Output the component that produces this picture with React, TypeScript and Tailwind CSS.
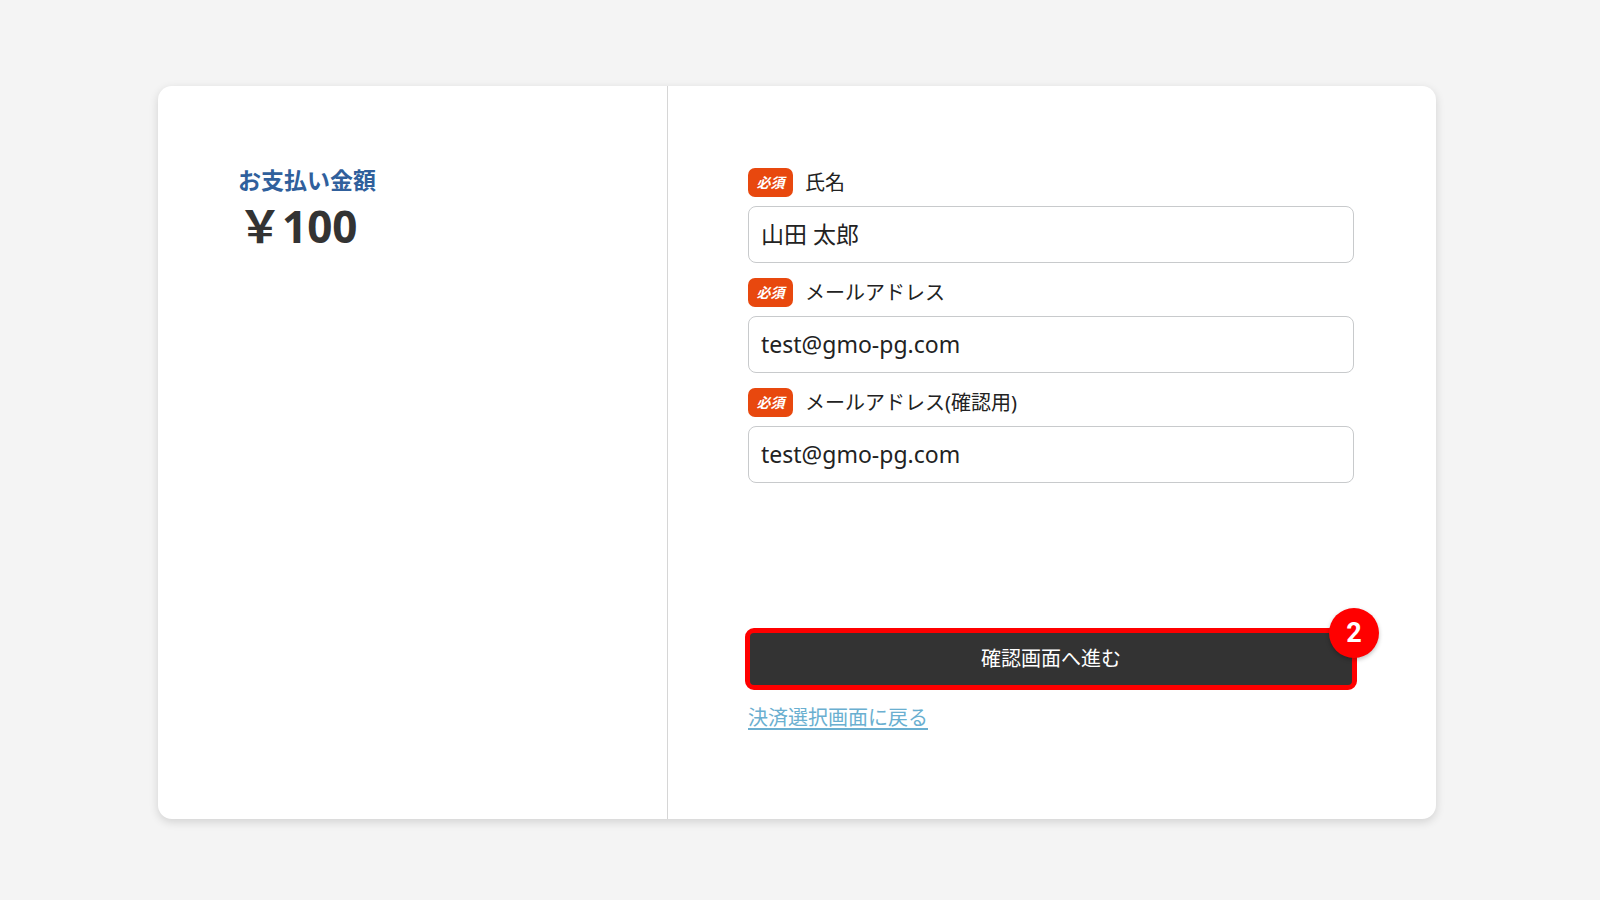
import React from "react";

const jp = { fontFamily: '"Noto Sans", "Noto Sans CJK JP", sans-serif' };

function Badge() {
  return (
    <span className="flex h-[29px] w-[45px] items-center justify-center rounded-[7px] bg-[#e8480e] text-[14px] font-bold italic text-white">
      必須
    </span>
  );
}

function Field({ label, value }: { label: string; value: string }) {
  return (
    <div className="flex flex-col">
      <div className="flex h-[29px] items-center gap-[12px]">
        <Badge />
        <span className="text-[20px] text-[#222]">{label}</span>
      </div>
      <div className="mt-[9px] flex h-[57px] w-[606px] items-center rounded-[8px] border border-[#c8cacc] bg-white px-[12px]">
        <span className="text-[23px] text-[#222]">{value}</span>
      </div>
    </div>
  );
}

export default function App() {
  return (
    <div className="h-[900px] w-[1600px] bg-[#f4f4f4] pl-[158px] pt-[86px]" style={jp}>
      <div className="flex h-[733px] w-[1278px] overflow-hidden rounded-[14px] bg-white shadow-[0_3px_10px_rgba(0,0,0,0.14)]">
        <div className="w-[510px] border-r border-[#d6d6d6] pl-[80px] pt-[80px]">
          <div className="text-[23px] font-bold leading-[28px] text-[#30609c]">お支払い金額</div>
          <div className="mt-[6px] text-[44px] font-bold leading-[52px] text-[#333]">￥100</div>
        </div>
        <div className="flex flex-1 flex-col pl-[80px] pt-[82px]">
          <div className="flex flex-col gap-[15px]">
            <Field label="氏名" value="山田 太郎" />
            <Field label="メールアドレス" value="test@gmo-pg.com" />
            <Field label="メールアドレス(確認用)" value="test@gmo-pg.com" />
          </div>
          <div className="relative mt-[145px] ml-[-3px] w-[612px]">
            <div className="flex h-[62px] items-center justify-center rounded-[9px] border-[5px] border-[#f00] bg-[#333] text-[20px] text-white">
              確認画面へ進む
            </div>
            <div
              className="absolute right-[-22px] top-[-20px] flex h-[50px] w-[50px] items-center justify-center rounded-full bg-[#f00] text-[27px] font-bold text-white shadow-[0_2px_4px_rgba(0,0,0,0.25)]"
              style={{ fontFamily: 'Roboto, "Liberation Sans", sans-serif' }}
            >
              2
            </div>
          </div>
          <a className="mt-[14px] w-fit text-[20px] leading-[28px] text-[#6aafd0] underline underline-offset-[3px]">
            決済選択画面に戻る
          </a>
        </div>
      </div>
    </div>
  );
}
